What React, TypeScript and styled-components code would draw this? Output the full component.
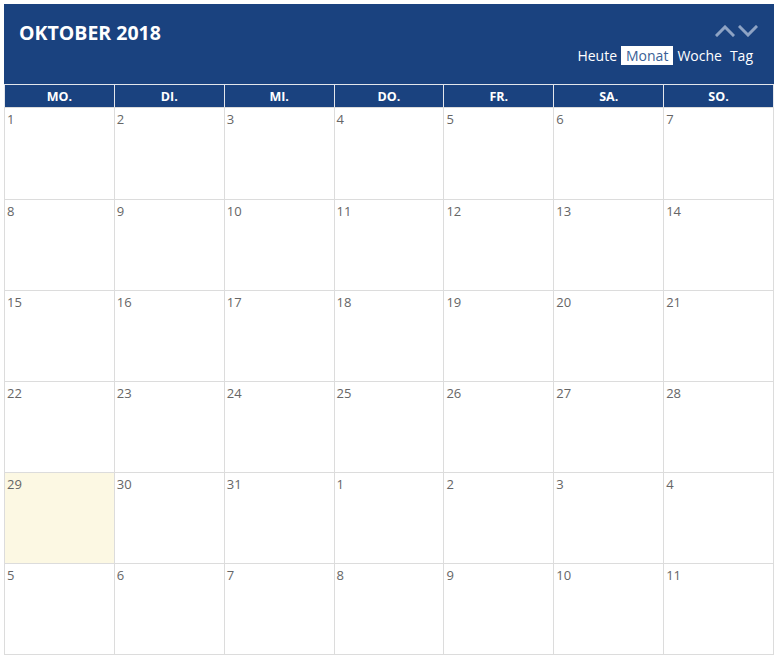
import React from "react";
import styled, { createGlobalStyle } from "styled-components";

const GlobalStyle = createGlobalStyle`
  body {
    margin: 0;
    background: #fff;
    font-family: "Open Sans", "Liberation Sans", sans-serif;
  }
`;

const BLUE = "#1a427f";

const Calendar = styled.div`
  width: 770px;
  margin: 4px 0 0 4px;
`;

const Header = styled.div`
  height: 80px;
  background: ${BLUE};
  display: flex;
  justify-content: space-between;
  padding: 0 19px 0 15px;
  box-sizing: border-box;
`;

const Title = styled.h1`
  margin: 17px 0 0;
  color: #fff;
  font-size: 19.5px;
  font-weight: 700;
  line-height: 24px;
`;

const Controls = styled.div`
  display: flex;
  flex-direction: column;
  align-items: flex-end;
  padding-top: 18px;
`;

const Arrows = styled.div`
  display: flex;
  gap: 3px;
  margin-right: -3px;
`;

const ArrowButton = styled.button`
  border: 0;
  background: none;
  padding: 0;
  width: 20px;
  height: 18px;
  display: flex;
  align-items: center;
  justify-content: center;
  cursor: pointer;
`;

const Views = styled.div`
  display: flex;
  align-items: center;
  margin-top: 6px;
  margin-right: -2px;
`;

const ViewButton = styled.button<{ $active?: boolean }>`
  border: 0;
  margin: 0;
  font-family: inherit;
  font-size: 14px;
  line-height: 19px;
  height: 19px;
  padding: ${(p) => (p.$active ? "0 5px" : "0 4px")};
  background: ${(p) => (p.$active ? "#fff" : "transparent")};
  color: ${(p) => (p.$active ? "#3a5f96" : "#fff")};
  cursor: pointer;
`;

const DayHeads = styled.div`
  display: grid;
  grid-template-columns: repeat(7, 1fr);
  border-top: 1px solid #e3e6ec;
  background: #e3e6ec;
  column-gap: 1px;
  padding: 0 1px;
`;

const DayHead = styled.div`
  background: ${BLUE};
  color: #fff;
  font-size: 12.5px;
  font-weight: 700;
  text-align: center;
  height: 22px;
  line-height: 24px;
`;

const Grid = styled.div`
  display: grid;
  grid-template-columns: repeat(7, 1fr);
  grid-template-rows: 92px repeat(5, 91px);
  border-left: 1px solid #dcdcdc;
  border-top: 1px solid #dcdcdc;
`;

const Cell = styled.div<{ $today?: boolean }>`
  box-sizing: border-box;
  border-right: 1px solid #dcdcdc;
  border-bottom: 1px solid #dcdcdc;
  background: ${(p) => (p.$today ? "#fcf8e3" : "#fff")};
  color: #666;
  font-size: 13px;
  line-height: 18px;
  padding: 2px 0 0 2px;
`;

const Chevron = ({ up }: { up?: boolean }) => (
  <svg width="20" height="12" viewBox="0 0 20 12" fill="none">
    <path
      d={up ? "M2 10 L10 2 L18 10" : "M2 2 L10 10 L18 2"}
      stroke="#8ea3c4"
      strokeWidth="3"
      strokeLinecap="square"
    />
  </svg>
);

const days = ["MO.", "DI.", "MI.", "DO.", "FR.", "SA.", "SO."];

const cells: number[] = [];
for (let i = 1; i <= 31; i++) cells.push(i);
for (let i = 1; i <= 11; i++) cells.push(i);

const App = () => {
  return (
    <Calendar>
      <GlobalStyle />
      <Header>
        <Title>OKTOBER 2018</Title>
        <Controls>
          <Arrows>
            <ArrowButton aria-label="zurück">
              <Chevron up />
            </ArrowButton>
            <ArrowButton aria-label="vor">
              <Chevron />
            </ArrowButton>
          </Arrows>
          <Views>
            <ViewButton>Heute</ViewButton>
            <ViewButton $active>Monat</ViewButton>
            <ViewButton>Woche</ViewButton>
            <ViewButton>Tag</ViewButton>
          </Views>
        </Controls>
      </Header>
      <DayHeads>
        {days.map((d) => (
          <DayHead key={d}>{d}</DayHead>
        ))}
      </DayHeads>
      <Grid>
        {cells.map((n, i) => (
          <Cell key={i} $today={i === 28}>
            {n}
          </Cell>
        ))}
      </Grid>
    </Calendar>
  );
};

export default App;
